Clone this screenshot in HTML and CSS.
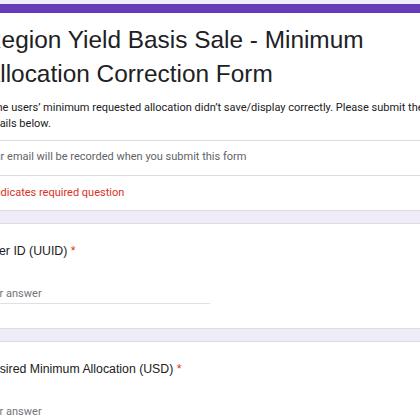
FILE: index.html
```html
<!DOCTYPE html>
<html lang="en">
<head>
<meta charset="utf-8">
<title>Region Yield Basis Sale - Minimum Allocation Correction Form</title>
<link rel="stylesheet" href="styles.css">
</head>
<body>
<main class="form">
  <section class="card header">
    <div class="head-main">
      <h1 class="title">Region Yield Basis Sale - Minimum Allocation Correction Form</h1>
      <p class="desc">The users’ minimum requested allocation didn’t save/display correctly. Please submit the details below.</p>
    </div>
    <div class="row email">Your email will be recorded when you submit this form</div>
    <div class="row required">* Indicates required question</div>
  </section>
  <section class="card question">
    <div class="label">User ID (UUID) <span class="star">*</span></div>
    <div class="answer">Your answer</div>
  </section>
  <section class="card question">
    <div class="label">Desired Minimum Allocation (USD) <span class="star">*</span></div>
    <div class="answer">Your answer</div>
  </section>
</main>
</body>
</html>
```
FILE: styles.css
```css
html, body {
  margin: 0;
  padding: 0;
  background: #f0ebf8;
  overflow: hidden;
}
body {
  height: 420px;
}
.form {
  margin-left: -35px;
  width: 493px;
  padding-top: 4px;
  display: flex;
  flex-direction: column;
  gap: 12px;
}
.card {
  background: #fff;
  border: 1px solid #dadce0;
  border-radius: 6px;
}
.header {
  border-top: 9px solid #673ab7;
}
.head-main {
  padding: 10px 18px 8px;
  border-bottom: 1px solid #dadce0;
}
.title {
  margin: 0;
  font-family: "Liberation Sans", Arial, sans-serif;
  font-weight: 400;
  font-size: 24.4px;
  line-height: 34px;
  color: #202124;
}
.desc {
  margin: 9px 0 0;
  text-indent: 6px;
  font-family: Roboto, "Noto Sans", sans-serif;
  font-size: 11px;
  line-height: 16px;
  color: #202124;
}
.row {
  padding: 8px 18px 10px;
  font-family: Roboto, "Noto Sans", sans-serif;
  font-size: 11px;
  line-height: 16px;
}
.email {
  color: #5f6368;
  padding-left: 16px;
  border-bottom: 1px solid #dadce0;
}
.required {
  color: #d93025;
  padding-top: 9px;
  padding-bottom: 9px;
}
.question {
  padding: 18px 18px 24px;
}
.label {
  font-family: "Liberation Sans", Arial, sans-serif;
  font-size: 12.3px;
  line-height: 18px;
  color: #202124;
}
.star {
  color: #d93025;
}
.answer {
  margin-top: 25px;
  margin-left: -3px;
  width: 229px;
  font-family: Roboto, "Noto Sans", sans-serif;
  font-size: 11px;
  line-height: 18px;
  color: #70757a;
  border-bottom: 1px solid #e0e0e0;
}
```
